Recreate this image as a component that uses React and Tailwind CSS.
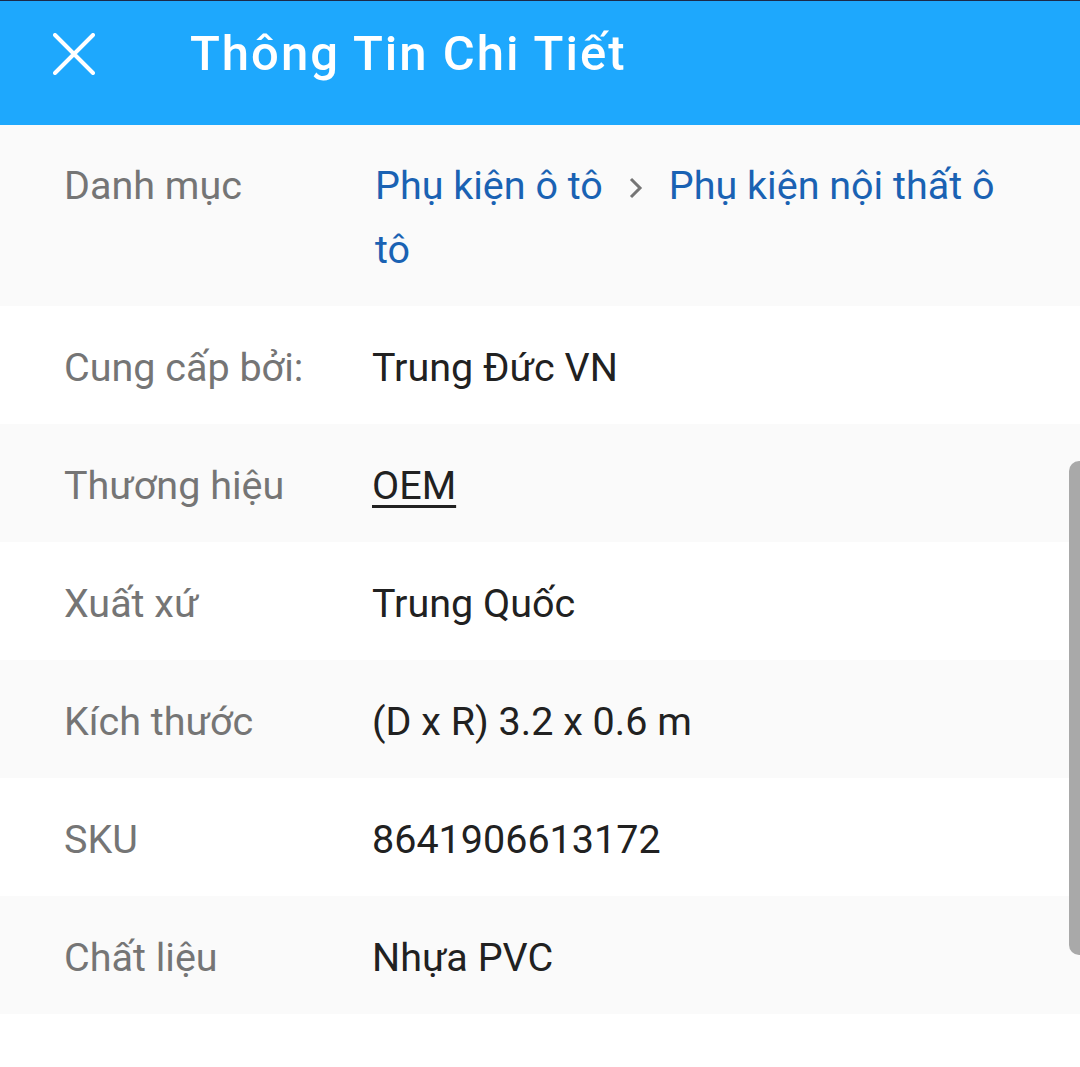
import React from "react";

const rows = [
  { label: "Cung cấp bởi:", value: "Trung Đức VN" },
  { label: "Thương hiệu", value: "OEM", underline: true },
  { label: "Xuất xứ", value: "Trung Quốc" },
  { label: "Kích thước", value: "(D x R) 3.2 x 0.6 m" },
  { label: "SKU", value: "8641906613172" },
  { label: "Chất liệu", value: "Nhựa PVC" },
];

export default function App() {
  return (
    <div
      className="relative w-[1080px] h-[1067px] bg-white overflow-hidden"
      style={{ fontFamily: "Roboto, 'Noto Sans', sans-serif" }}
    >
      <div className="h-[1px] bg-[#1b2a4a]" />
      <div className="h-[124px] bg-[#1ea8fd] flex items-start">
        <div className="w-[190px] pl-[53px] pt-[32px]">
          <svg width="42" height="42" viewBox="0 0 42 42">
            <path d="M2 2 L40 40 M40 2 L2 40" stroke="white" strokeWidth="4" strokeLinecap="round" />
          </svg>
        </div>
        <div className="text-white text-[49px] font-medium leading-[56px] pt-[25px] tracking-[2px]">Thông Tin Chi Tiết</div>
      </div>

      <div className="flex bg-[#fafafa] pt-[29px] pb-[24px] pl-[64px] pr-[64px] text-[39.5px] leading-[64px]">
        <div className="w-[308px] shrink-0 text-[#757575]">Danh mục</div>
        <div className="flex-1 text-[#1a62b3] pl-[3px]">
          Phụ kiện ô tô
          <span className="inline-block px-[25px] text-[#757575]">
            <svg width="16" height="24" viewBox="0 0 16 24" className="inline-block align-[-1px]">
              <path d="M3 3 L12 12 L3 21" fill="none" stroke="#757575" strokeWidth="3" />
            </svg>
          </span>
          Phụ kiện nội thất ô tô
        </div>
      </div>

      {rows.map((r, i) => (
        <div
          key={r.label}
          className={`flex items-center h-[118px] pt-[6px] pl-[64px] pr-[64px] text-[39.5px] ${i % 2 === 1 ? "bg-[#fafafa]" : "bg-white"}`}
        >
          <div className="w-[308px] shrink-0 text-[#757575]">{r.label}</div>
          <div className={`flex-1 text-[#212121] ${r.underline ? "underline underline-offset-[6px] decoration-[3px]" : ""}`}>
            {r.value}
          </div>
        </div>
      ))}

      <div className="absolute right-0 top-[461px] w-[11px] h-[494px] bg-[#a9a9a9] rounded-l-[10px]" />
    </div>
  );
}
